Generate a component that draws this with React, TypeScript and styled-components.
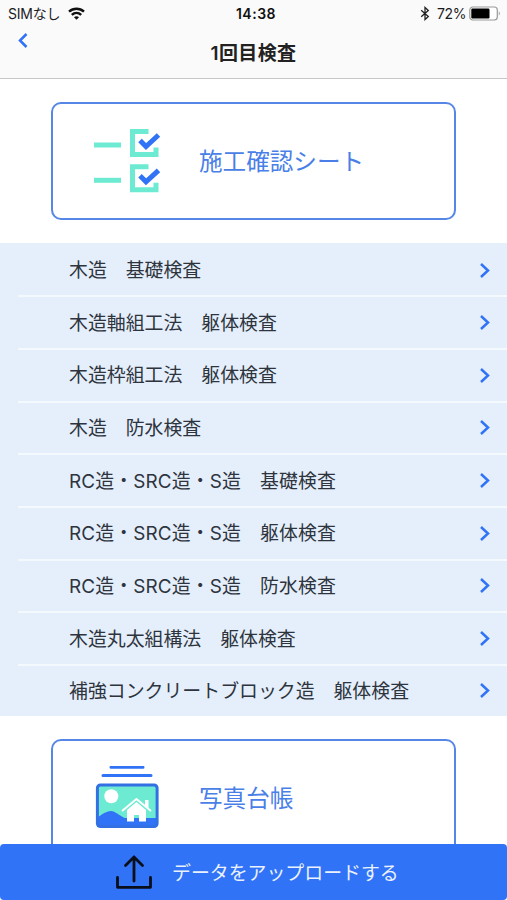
import React from "react";
import styled, { createGlobalStyle } from "styled-components";

const BLUE = "#3173f6";
const MINT = "#6debd2";

const GlobalStyle = createGlobalStyle`
  * { box-sizing: border-box; }
  body { margin: 0; background: #fff; }
`;

const Screen = styled.div`
  height: 900px;
  display: flex;
  flex-direction: column;
  overflow: hidden;
  background: #fff;
  color: #2e343d;
  font-family: Inter, "Noto Sans CJK JP", sans-serif;
`;

const Header = styled.header`
  flex: none;
  height: 79px;
  background: #fafafa;
  border-bottom: 1px solid #c6c6c8;
`;

const StatusBar = styled.div`
  height: 28px;
  display: grid;
  grid-template-columns: 1fr auto 1fr;
  align-items: center;
  padding: 0 6px 0 8px;
  font-size: 14px;
  line-height: 28px;
  color: #1c1c1e;
`;

const StatusGroup = styled.div<{ $end?: boolean }>`
  display: flex;
  align-items: center;
  justify-content: ${(p) => (p.$end ? "flex-end" : "flex-start")};
  height: 28px;
  letter-spacing: ${(p) => (p.$end ? "-0.4px" : "-0.25px")};
`;

const WifiIcon = styled.svg`
  margin-left: 8px;
  margin-bottom: 2px;
`;

const BluetoothIcon = styled.svg`
  margin-right: 7px;
  margin-bottom: 2px;
`;

const BatteryIcon = styled.svg`
  margin-left: 3px;
  margin-bottom: 2px;
`;

const Clock = styled.div`
  font-weight: 600;
  letter-spacing: 0.5px;
  color: #111;
  padding-left: 3px;
`;

const NavBar = styled.div`
  height: 50px;
  display: grid;
  grid-template-columns: 60px 1fr 60px;
`;

const BackButton = styled.button`
  border: 0;
  background: none;
  padding: 4px 0 0 17px;
  display: flex;
  align-items: flex-start;
`;

const Title = styled.h1`
  margin: 0;
  text-align: center;
  font-size: 19px;
  font-weight: 600;
  letter-spacing: 0.4px;
  line-height: 51px;
  color: #222;
`;

const Content = styled.main`
  flex: 1;
  min-height: 0;
  overflow: hidden;
`;

const Card = styled.section`
  height: 118px;
  margin: 23px 51px 23px;
  padding-left: 41px;
  border: 2px solid #5686e6;
  border-radius: 10px;
  display: grid;
  grid-template-columns: 105px 1fr;
  align-items: center;
`;

const CardLabel = styled.h2`
  margin: 0;
  padding-top: 2px;
  font-size: 23.6px;
  font-weight: 400;
  line-height: 34px;
  color: #4a7fe8;
`;

const List = styled.ul`
  margin: 0;
  padding: 0;
  list-style: none;
  background: #e5effb;
`;

const Row = styled.li`
  height: 52.7px;
  margin-left: 18px;
  padding: 0 16px 0 51px;
  display: flex;
  align-items: center;
  justify-content: space-between;

  & + & {
    border-top: 2px solid #f4f9fe;
  }
  &:first-child {
    height: 52.2px;
    padding-top: 2px;
  }
  &:last-child {
    height: 51.9px;
  }
`;

const RowLabel = styled.span<{ $mixed: boolean }>`
  padding-top: 2px;
  font-size: 18.9px;
  line-height: 28px;
  letter-spacing: ${(p) => (p.$mixed ? "0.13px" : "0")};
  white-space: nowrap;
`;

const UploadButton = styled.button`
  flex: none;
  height: 56px;
  padding: 0 0 0 115px;
  border: 0;
  border-radius: 4px;
  background: ${BLUE};
  color: #eaf2ff;
  display: flex;
  align-items: center;
  gap: 19px;
  font: 400 18.9px/28px Inter, "Noto Sans CJK JP", sans-serif;
`;

const UploadLabel = styled.span`
  padding-top: 3px;
`;

function Chevron({ left = false }: { left?: boolean }) {
  return (
    <svg width="12" height="17" viewBox="0 0 12 17" fill="none" stroke={BLUE} strokeWidth="2.5">
      <path d={left ? "M9.5 2 3 8.5 9.5 15" : "M2 2l7 6.5L2 15"} />
    </svg>
  );
}

function ChecklistItem({ y }: { y: number }) {
  return (
    <g transform={`translate(0 ${y})`} fill="none" strokeWidth="5">
      <path d="M0 16h27" stroke={MINT} />
      <path d="M54.5 2.5h-16v23h23.5v-7" stroke={MINT} />
      <path d="M46 11.5l6 6L64.5 6" stroke={BLUE} />
    </g>
  );
}

function ChecklistIcon() {
  return (
    <svg width="67" height="64" viewBox="0 0 67 64">
      <ChecklistItem y={0} />
      <ChecklistItem y={35.3} />
    </svg>
  );
}

function PhotosIcon() {
  return (
    <svg width="67" height="64" viewBox="0 1 67 64">
      <path d="M17 2.3h32M9 10.6h48" stroke={BLUE} strokeWidth="3" strokeLinecap="round" />
      <rect x="3" y="20" width="60" height="41.5" rx="3" fill={MINT} />
      <path d="M3 53C8 49 13 46 17 46s9 5 14 7h32v9H3z" fill={BLUE} />
      <rect x="3.4" y="19.9" width="59.7" height="41.7" rx="3" fill="none" stroke="#3270e3" strokeWidth="3" />
      <circle cx="17.3" cy="31.3" r="7" fill="#fff" />
      <path d="M28 46 42.5 34 57 46" fill="none" stroke="#fff" strokeWidth="2" />
      <path d="M51 35h3.5v9L51 41z" fill="#fff" />
      <path d="M33 45l9.5-8 9.5 8v11.5h-7V50h-5v6.5h-7z" fill="#fff" />
    </svg>
  );
}

function UploadIcon() {
  return (
    <svg width="38" height="36" viewBox="0 0 38 36" fill="none" stroke="#080e1b" strokeWidth="2.8" strokeLinecap="round" strokeLinejoin="round">
      <path d="M19 27V3M10.5 11.5 19 3l8.5 8.5M2.5 23.5v9.8h33v-9.8" />
    </svg>
  );
}

const inspections = [
  "木造　基礎検査",
  "木造軸組工法　躯体検査",
  "木造枠組工法　躯体検査",
  "木造　防水検査",
  "RC造・SRC造・S造　基礎検査",
  "RC造・SRC造・S造　躯体検査",
  "RC造・SRC造・S造　防水検査",
  "木造丸太組構法　躯体検査",
  "補強コンクリートブロック造　躯体検査",
];

export default function App() {
  return (
    <Screen lang="ja">
      <GlobalStyle />
      <Header>
        <StatusBar>
          <StatusGroup>
            SIMなし
            <WifiIcon width="17" height="13" viewBox="0 0 17 13" fill="none" stroke="#111" strokeWidth="2.4">
              <path d="M1 4.7c4.3-4 10.7-4 15 0M3.8 7.8c2.7-2.5 6.7-2.5 9.4 0" />
              <path d="M6 10.2c1.4-1.4 3.6-1.4 5 0L8.5 12.7z" fill="#111" stroke="none" />
            </WifiIcon>
          </StatusGroup>
          <Clock>14:38</Clock>
          <StatusGroup $end>
            <BluetoothIcon width="10" height="15" viewBox="0 0 10 15" fill="none" stroke="#222" strokeWidth="1.3">
              <path d="M1.2 4.2 8.3 10.6 5 13.6V1.4l3.3 3L1.2 10.8" />
            </BluetoothIcon>
            72%
            <BatteryIcon width="32" height="15" viewBox="0 0 32 15">
              <rect x="0.8" y="1" width="27.5" height="13" rx="3" fill="#fff" stroke="#999" strokeWidth="1.2" />
              <rect x="2.3" y="2.6" width="18.2" height="9.8" rx="1.2" fill="#000" />
              <path d="M29.8 5.3q2 2.2 0 4.4z" fill="#999" />
            </BatteryIcon>
          </StatusGroup>
        </StatusBar>
        <NavBar>
          <BackButton aria-label="戻る">
            <Chevron left />
          </BackButton>
          <Title>1回目検査</Title>
        </NavBar>
      </Header>
      <Content>
        <Card>
          <ChecklistIcon />
          <CardLabel>施工確認シート</CardLabel>
        </Card>
        <List>
          {inspections.map((name) => (
            <Row key={name}>
              <RowLabel $mixed={name.startsWith("RC")}>{name}</RowLabel>
              <Chevron />
            </Row>
          ))}
        </List>
        <Card>
          <PhotosIcon />
          <CardLabel>写真台帳</CardLabel>
        </Card>
      </Content>
      <UploadButton>
        <UploadIcon />
        <UploadLabel>データをアップロードする</UploadLabel>
      </UploadButton>
    </Screen>
  );
}
